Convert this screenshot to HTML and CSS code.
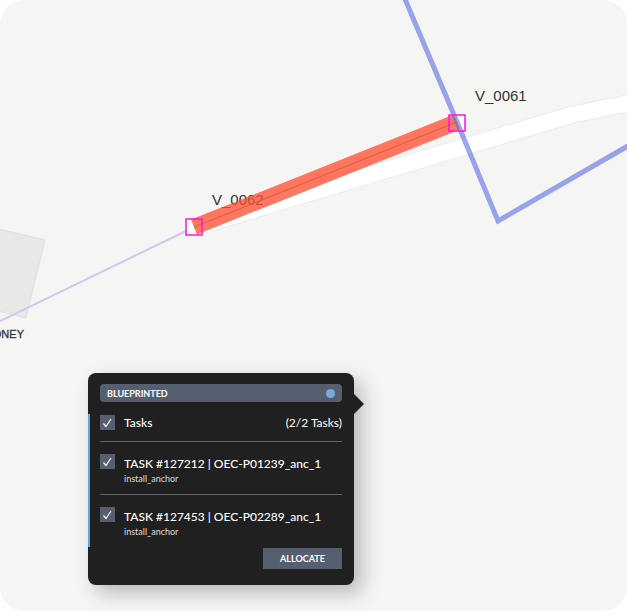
FILE: index.html
```
<!DOCTYPE html>
<html lang="en">
<head>
  <meta charset="UTF-8">
  <title>Blueprint tasks</title>
  <link rel="stylesheet" href="styles.css">
</head>
<body>
  <main class="map">
    <svg class="map-canvas" viewBox="0 0 627 611" preserveAspectRatio="xMidYMin slice" role="img" aria-label="Map">
      <!-- building -->
      <polygon class="building" points="-30,222 45,240 26,318 -30,304" />
      <text class="street" x="24" y="338">ONEY</text>

      <!-- road -->
      <polyline class="road-edge" points="196,227 420,160 571,115 640,101" />
      <polyline class="road" points="196,227 420,160 571,115 640,101" />

      <line class="cable" x1="-4" y1="323" x2="186" y2="231" />

      <rect class="node-fill" x="187" y="219" width="15" height="15" />
      <rect class="node-fill" x="449" y="115" width="15" height="15" />
      <text class="label" x="212" y="205">V_0062</text>
      <text class="label" x="475" y="101">V_0061</text>

      <!-- selected span -->
      <line class="span-line" x1="194" y1="227" x2="457" y2="122" />
      <line class="span" x1="194" y1="227" x2="457" y2="122" />
      <polyline class="boundary" points="402,-8 457,122 498,221 640,139" />

      <rect class="node" x="186" y="219" width="16" height="16" />
      <rect class="node" x="449" y="115" width="16" height="16" />
    </svg>

    <section class="popup">
      <header class="status">
        <span>BLUEPRINTED</span>
        <span class="status-dot"></span>
      </header>

      <div class="tasks">
        <div class="row row-head">
          <input class="check" type="checkbox" id="all" checked>
          <label class="title" for="all">Tasks</label>
          <span class="count">(2/2 Tasks)</span>
        </div>
        <div class="row">
          <input class="check" type="checkbox" id="task1" checked>
          <label class="task" for="task1">
            <span class="title">TASK #127212 | OEC-P01239_anc_1</span>
            <span class="type">install_anchor</span>
          </label>
        </div>
        <div class="row">
          <input class="check" type="checkbox" id="task2" checked>
          <label class="task" for="task2">
            <span class="title">TASK #127453 | OEC-P02289_anc_1</span>
            <span class="type">install_anchor</span>
          </label>
        </div>
      </div>

      <button class="allocate" type="button">ALLOCATE</button>
    </section>
  </main>
</body>
</html>
```

FILE: styles.css
```
* {
  box-sizing: border-box;
}

body {
  margin: 0;
  background: #fff;
  font-family: Lato, "Liberation Sans", sans-serif;
}

.map {
  position: relative;
  height: calc(100vh - 4px);
  border-radius: 24px;
  background: #f5f5f4;
  overflow: hidden;
}

.map-canvas {
  display: block;
  width: 100%;
  height: 100%;
}

.building {
  fill: #e8e8e7;
  stroke: #dededd;
}

.street {
  font: 11px "Liberation Sans", sans-serif;
  fill: #333;
  stroke: #333;
  stroke-width: 0.3px;
  text-anchor: end;
}

.road-edge,
.road,
.boundary,
.cable,
.span,
.span-line {
  fill: none;
}

.road-edge {
  stroke: #e8ecea;
  stroke-width: 18px;
}

.road {
  stroke: #fff;
  stroke-width: 16px;
}

.cable {
  stroke: #d6c6ee;
  stroke-width: 2px;
}

.label {
  font: 15px "Liberation Sans", sans-serif;
  fill: #333;
}

.span {
  stroke: #ff4e32;
  stroke-opacity: 0.77;
  stroke-width: 16px;
}

.span-line {
  stroke: #777;
  stroke-width: 1px;
}

.boundary {
  stroke: #5a6ae0;
  stroke-opacity: 0.6;
  stroke-width: 5px;
}

.node-fill {
  fill: #fff;
}

.node {
  fill: none;
  stroke: #f41ade;
  stroke-width: 1.5px;
}

.popup {
  position: absolute;
  left: 88px;
  top: 373px;
  width: 266px;
  padding: 11px 12px 16px;
  border-radius: 8px;
  background: #202020;
  color: #fff;
  box-shadow: 8px 8px 20px rgba(0, 0, 0, 0.25);
}

/* pointer on the right side */
.popup::after {
  content: "";
  position: absolute;
  left: 100%;
  top: 21px;
  border: 10px solid transparent;
  border-left-color: #202020;
  border-right-width: 0;
}

.status {
  display: flex;
  align-items: center;
  justify-content: space-between;
  height: 18px;
  padding: 0 7px;
  border-radius: 4px;
  background: #565f70;
  font-size: 9px;
  font-weight: 700;
}

.status-dot {
  width: 9px;
  height: 9px;
  border-radius: 50%;
  background: #78a8dc;
}

.tasks {
  margin: 12px -12px 0;
  padding: 0 12px 0 10px;
  border-left: 2px solid #6ca0d8;
}

.row {
  display: flex;
  align-items: flex-start;
  gap: 9px;
  padding: 12px 0 10px;
}

.row + .row {
  border-top: 1px solid #666;
}

.row-head {
  padding: 1px 0 11px;
}

.check {
  appearance: none;
  flex: none;
  width: 15px;
  height: 15px;
  margin: 0;
  background: #565f70 url("data:image/svg+xml,%3Csvg xmlns='http://www.w3.org/2000/svg' viewBox='0 0 15 15'%3E%3Cpath d='M3.500 8.500 6 11.500 11 4' fill='none' stroke='%23fff' stroke-width='1.200'/%3E%3C/svg%3E");
}

.title {
  font-size: 12px;
  font-weight: 500;
  line-height: 20px;
}

.row-head .title,
.count {
  line-height: 15px;
}

.count {
  margin-left: auto;
  font-size: 12px;
}

.task {
  display: flex;
  flex-direction: column;
}

.type {
  color: #ddd;
  font-size: 9px;
  line-height: 10px;
}

.allocate {
  display: block;
  width: 79px;
  height: 21px;
  margin: 1px 0 0 auto;
  padding: 0;
  border: 0;
  background: #565f70;
  color: #fff;
  font: 700 9px Lato, sans-serif;
}
```
